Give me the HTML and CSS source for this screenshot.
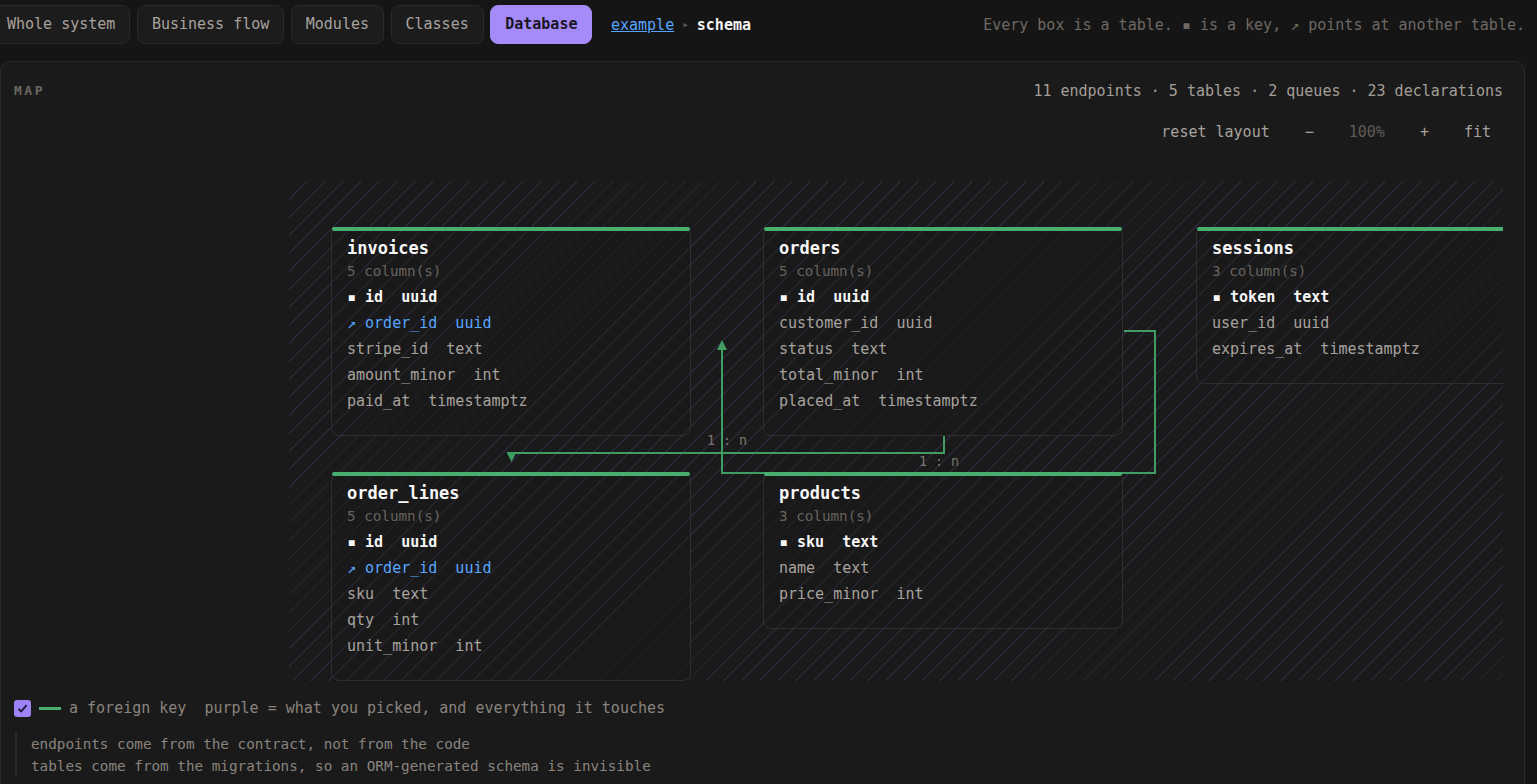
FILE: index.html
```html
<!doctype html>
<html lang="en">
<head>
    <meta charset="UTF-8">
    <meta name="viewport" content="width=device-width, initial-scale=1.0">
    <title>Database map</title>
    <link rel="stylesheet" href="styles.css">
</head>
<body>

<header class="topbar">
    <nav class="views">
        <button class="view">Whole system</button>
        <button class="view">Business flow</button>
        <button class="view">Modules</button>
        <button class="view">Classes</button>
        <button class="view view-active">Database</button>
        <div class="crumbs">
            <a href="#" class="crumb-link">example</a>
            <span class="crumb-sep">▸</span>
            <span class="crumb-here">schema</span>
        </div>
    </nav>
    <p class="hint">Every box is a table. ▪ is a key, ↗ points at another table.</p>
</header>

<section class="panel">
    <div class="panel-head">
        <span class="panel-title">MAP</span>
        <span class="stats">11 endpoints · 5 tables · 2 queues · 23 declarations</span>
    </div>

    <div class="zoom-bar">
        <button class="zoom-btn">reset layout</button>
        <button class="zoom-btn">−</button>
        <span class="zoom-level">100%</span>
        <button class="zoom-btn">+</button>
        <button class="zoom-btn">fit</button>
    </div>

    <div class="canvas">
        <div class="stage">
            <!-- foreign key edges -->
            <svg class="edges" width="1300" height="500">
                <polyline points="655,255 655,272 222.5,272 222.5,274" />
                <polygon points="217.5,271 227.5,271 222.5,281" />
                <text x="438" y="264">1 : n</text>

                <polyline points="835,150 866,150 866,292 433,292 433,168" />
                <polygon points="428,169 438,169 433,159" />
                <text x="650" y="285">1 : n</text>
            </svg>

            <div class="tbl tbl-invoices">
                <div class="tbl-bar"></div>
                <div class="tbl-name">invoices</div>
                <div class="tbl-count">5 column(s)</div>
                <div class="col col-key">▪ id  uuid</div>
                <div class="col col-fk">↗ order_id  uuid</div>
                <div class="col">stripe_id  text</div>
                <div class="col">amount_minor  int</div>
                <div class="col">paid_at  timestamptz</div>
            </div>

            <div class="tbl tbl-orders">
                <div class="tbl-bar"></div>
                <div class="tbl-name">orders</div>
                <div class="tbl-count">5 column(s)</div>
                <div class="col col-key">▪ id  uuid</div>
                <div class="col">customer_id  uuid</div>
                <div class="col">status  text</div>
                <div class="col">total_minor  int</div>
                <div class="col">placed_at  timestamptz</div>
            </div>

            <div class="tbl tbl-sessions">
                <div class="tbl-bar"></div>
                <div class="tbl-name">sessions</div>
                <div class="tbl-count">3 column(s)</div>
                <div class="col col-key">▪ token  text</div>
                <div class="col">user_id  uuid</div>
                <div class="col">expires_at  timestamptz</div>
            </div>

            <div class="tbl tbl-order-lines">
                <div class="tbl-bar"></div>
                <div class="tbl-name">order_lines</div>
                <div class="tbl-count">5 column(s)</div>
                <div class="col col-key">▪ id  uuid</div>
                <div class="col col-fk">↗ order_id  uuid</div>
                <div class="col">sku  text</div>
                <div class="col">qty  int</div>
                <div class="col">unit_minor  int</div>
            </div>

            <div class="tbl tbl-products">
                <div class="tbl-bar"></div>
                <div class="tbl-name">products</div>
                <div class="tbl-count">3 column(s)</div>
                <div class="col col-key">▪ sku  text</div>
                <div class="col">name  text</div>
                <div class="col">price_minor  int</div>
            </div>
        </div>
    </div>

    <div class="legend">
        <span class="check">
            <svg width="11" height="11" viewBox="0 0 11 11"><path d="M1.5 5.8 L4.2 8.5 L9.5 2.2" /></svg>
        </span>
        <span class="legend-line"></span>
        <span class="legend-text">a foreign key  purple = what you picked, and everything it touches</span>
    </div>

    <div class="notes">
        <div>endpoints come from the contract, not from the code</div>
        <div>tables come from the migrations, so an ORM-generated schema is invisible</div>
    </div>
</section>

</body>
</html>
```

FILE: styles.css
```css
html, body {
    height: 100%;
    overflow: hidden;
}

body {
    margin: 0;
    padding: 5px 12px 0 0;
    background: #151515;
    color: #a8a29e;
    font-family: "DejaVu Sans Mono", "Liberation Mono", monospace;
    font-size: 15px;
}

button {
    font-family: inherit;
    font-size: inherit;
    cursor: pointer;
}

/* top bar */

.topbar {
    display: flex;
    align-items: center;
    justify-content: space-between;
    margin-bottom: 17px;
}

.views {
    display: flex;
    align-items: center;
    gap: 6.5px;
    margin-left: -8px;
}

.view {
    padding: 9px 14px;
    line-height: 19px;
    border: 1px solid #292929;
    border-radius: 8px;
    background: #1c1c1c;
    color: #a8a29e;
}

.view-active {
    background: #a48bf8;
    border-color: #a48bf8;
    color: #1a1625;
    font-weight: bold;
}

.crumbs {
    display: flex;
    align-items: center;
    gap: 8px;
    margin-left: 12px;
}

.crumb-link {
    color: #58a6ff;
}

.crumb-sep {
    color: #5a5652;
    font-size: 11px;
}

.crumb-here {
    color: #f4f4f4;
    font-weight: bold;
}

.hint {
    margin: 0;
    color: #6e6963;
}

/* map panel */

.panel {
    border: 1px solid #2a2a2a;
    border-radius: 10px;
    background: #1a1a1a;
    padding: 19px 21px 200px 13px;
}

.panel-head {
    display: flex;
    align-items: center;
    justify-content: space-between;
    line-height: 20px;
}

.panel-title {
    color: #6b6661;
    font-size: 13px;
    font-weight: bold;
    letter-spacing: 2.5px;
}

.stats {
    color: #a39e98;
}

.zoom-bar {
    display: flex;
    justify-content: flex-end;
    align-items: center;
    gap: 11px;
    margin-top: 19px;
}

.zoom-btn {
    padding: 4px 12px;
    line-height: 16px;
    border: none;
    background: transparent;
    color: #a8a29e;
}

.zoom-level {
    padding: 4px 12px;
    line-height: 16px;
    color: #5e5a55;
}

.canvas {
    position: relative;
    height: 500px;
    margin-top: 37px;
    overflow: hidden;
}

.stage {
    position: absolute;
    left: 275px;
    top: 0;
    width: 1310px;
    height: 500px;
    background-image: repeating-linear-gradient(135deg, #2a2839 0 1.2px, transparent 1.2px 12.7px);
}

.edges {
    position: absolute;
    left: 0;
    top: 0;
    overflow: visible;
}

.edges polyline {
    fill: none;
    stroke: #3f9d63;
    stroke-width: 2;
}

.edges polygon {
    fill: #3f9d63;
}

.edges text {
    fill: #7a756f;
    font-family: "DejaVu Sans Mono", monospace;
    font-size: 13.3px;
    text-anchor: middle;
}

/* table boxes */

.tbl {
    position: absolute;
    width: 328px;
    padding: 10px 15px 21px;
    border: 1px solid #2e2e2e;
    border-radius: 8px;
    background: rgba(26, 26, 26, 0.35);
}

.tbl-invoices { left: 42px; top: 46px; }
.tbl-orders { left: 474px; top: 46px; }
.tbl-sessions { left: 907px; top: 46px; }
.tbl-order-lines { left: 42px; top: 291px; }
.tbl-products { left: 474px; top: 291px; }

.tbl-bar {
    position: absolute;
    left: 0;
    right: 0;
    top: -1px;
    height: 4px;
    border-radius: 2px;
    background: #48b06e;
}

.tbl-name {
    color: #f6f6f6;
    font-size: 17px;
    font-weight: bold;
    line-height: 20px;
}

.tbl-count {
    margin: 4px 0;
    color: #68635e;
    font-size: 14.25px;
    line-height: 18px;
}

.col {
    line-height: 26px;
    white-space: pre;
    color: #a8a29e;
}

.col-key {
    color: #f6f6f6;
    font-weight: bold;
}

.col-fk {
    color: #58a6ff;
}

/* legend and notes */

.legend {
    display: flex;
    align-items: center;
    margin-top: 18px;
    height: 18px;
}

.check {
    display: flex;
    align-items: center;
    justify-content: center;
    width: 17px;
    height: 17px;
    border-radius: 3px;
    background: #9d83f5;
}

.check path {
    fill: none;
    stroke: #1c1830;
    stroke-width: 1.8;
}

.legend-line {
    width: 22px;
    height: 3px;
    margin: 0 8px;
    background: #48b06e;
}

.legend-text {
    white-space: pre;
    color: #8a847e;
}

.notes {
    margin-top: 16px;
    margin-left: 1px;
    padding-left: 14px;
    border-left: 2px solid #2c2c2c;
    color: #8a847e;
    font-size: 14.3px;
    line-height: 22px;
}
```
